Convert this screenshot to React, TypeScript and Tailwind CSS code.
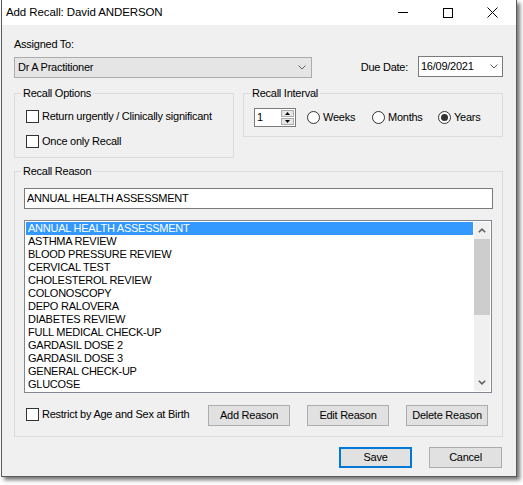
import { useState } from 'react';

const reasons = [
  'ANNUAL HEALTH ASSESSMENT',
  'ASTHMA REVIEW',
  'BLOOD PRESSURE REVIEW',
  'CERVICAL TEST',
  'CHOLESTEROL REVIEW',
  'COLONOSCOPY',
  'DEPO RALOVERA',
  'DIABETES REVIEW',
  'FULL MEDICAL CHECK-UP',
  'GARDASIL DOSE 2',
  'GARDASIL DOSE 3',
  'GENERAL CHECK-UP',
  'GLUCOSE',
];

function CheckBox({ label, checked, onChange }: { label: string; checked: boolean; onChange: () => void }) {
  return (
    <label className="flex items-center gap-[3px] cursor-default" onClick={onChange}>
      <span className="w-[13px] h-[13px] border border-[#333333] bg-white flex items-center justify-center shrink-0">
        {checked && (
          <svg width="9" height="7" viewBox="0 0 9 7">
            <path d="M0.5 3.5 L3.2 6 L8.5 0.5" stroke="#333" strokeWidth="1.4" fill="none" />
          </svg>
        )}
      </span>
      <span className="leading-[13px]">{label}</span>
    </label>
  );
}

function Radio({ label, checked, onSelect, width }: { label: string; checked: boolean; onSelect: () => void; width: string }) {
  return (
    <label className={`flex items-center gap-[3px] cursor-default ${width}`} onClick={onSelect}>
      <span className="w-[13px] h-[13px] rounded-full border border-[#333333] bg-white flex items-center justify-center shrink-0">
        {checked && <span className="w-[7px] h-[7px] rounded-full bg-[#333333]" />}
      </span>
      <span className="leading-[13px]">{label}</span>
    </label>
  );
}

function Button({ children, primary, width }: { children: React.ReactNode; primary?: boolean; width: string }) {
  return (
    <button
      className={`${width} h-[21px] bg-[#e1e1e1] flex items-center justify-center leading-[13px] ${
        primary ? 'border-2 border-[#0078d7]' : 'border border-[#adadad]'
      }`}
    >
      {children}
    </button>
  );
}

function Chevron() {
  return (
    <svg width="8" height="5" viewBox="0 0 8 5">
      <path d="M0.5 0.5 L4 4 L7.5 0.5" stroke="#606060" strokeWidth="1" fill="none" />
    </svg>
  );
}

export default function App() {
  const [urgent, setUrgent] = useState(false);
  const [onceOnly, setOnceOnly] = useState(false);
  const [restrict, setRestrict] = useState(false);
  const [interval, setInterval] = useState<'weeks' | 'months' | 'years'>('years');
  const [selected, setSelected] = useState(0);

  return (
    <div className="w-[523px] h-[485px] bg-white pl-[1px] font-['Liberation_Sans',Arial,sans-serif] text-[11px] tracking-[-0.25px] text-black">
      <div className="w-[516px] h-[477px] border-x border-b border-[#5a5a5a] bg-[#f0f0f0] flex flex-col shadow-[3px_3px_4px_rgba(0,0,0,0.55)]">
        {/* title bar */}
        <div className="h-[25px] bg-white flex items-center shrink-0">
          <span className="pl-[4px] text-[11.5px] tracking-[-0.1px]">Add Recall: David ANDERSON</span>
          <div className="ml-auto flex h-full mr-[1px]">
            <div className="w-[45px] flex items-center justify-center">
              <svg width="10" height="1" viewBox="0 0 10 1">
                <rect width="10" height="1" fill="#000" />
              </svg>
            </div>
            <div className="w-[45px] flex items-center justify-center">
              <svg width="10" height="10" viewBox="0 0 10 10">
                <rect x="0.5" y="0.5" width="9" height="9" stroke="#000" fill="none" />
              </svg>
            </div>
            <div className="w-[45px] flex items-center justify-center">
              <svg width="11" height="11" viewBox="0 0 11 11">
                <path d="M0.5 0.5 L10.5 10.5 M10.5 0.5 L0.5 10.5" stroke="#000" strokeWidth="1" />
              </svg>
            </div>
          </div>
        </div>

        <div className="flex flex-col pl-[12px] pr-[13px]">
          <div className="mt-[13px] leading-[13px]">Assigned To:</div>

          <div className="mt-[5px] flex items-start">
            <div className="mt-[1px] w-[298px] h-[21px] bg-[#e5e5e5] border border-[#acacac] flex items-center pl-[3px] pr-[5px]">
              <span>Dr A Practitioner</span>
              <span className="ml-auto">
                <Chevron />
              </span>
            </div>
            <span className="ml-auto mt-[5px] leading-[13px]">Due Date:</span>
            <div className="ml-[10px] w-[85px] h-[21px] bg-white border border-[#7a7a7a] flex items-center pl-[2px] pr-[4px]">
              <span>16/09/2021</span>
              <span className="ml-auto">
                <Chevron />
              </span>
            </div>
          </div>

          <div className="mt-[9px] flex items-start gap-[9px]">
            <fieldset className="w-[220px] h-[71px] border border-[#dcdcdc]">
              <legend className="ml-[6px] px-[2px] leading-[13px]">Recall Options</legend>
              <div className="pl-[11px] pt-[10px] flex flex-col gap-[12px]">
                <CheckBox label="Return urgently / Clinically significant" checked={urgent} onChange={() => setUrgent(!urgent)} />
                <CheckBox label="Once only Recall" checked={onceOnly} onChange={() => setOnceOnly(!onceOnly)} />
              </div>
            </fieldset>

            <fieldset className="w-[260px] h-[50px] border border-[#dcdcdc]">
              <legend className="ml-[6px] px-[2px] leading-[13px]">Recall Interval</legend>
              <div className="pl-[10px] pt-[8px] flex items-center">
                <div className="w-[42px] h-[19px] bg-white border border-[#7a7a7a] flex items-center pl-[2px]">
                  <span>1</span>
                  <div className="ml-auto mr-[1px] w-[13px] h-[15px] flex flex-col gap-[1px]">
                    <div className="flex-1 bg-[#e6e6e6] border border-[#adadad] flex items-center justify-center">
                      <svg width="5" height="3" viewBox="0 0 5 3">
                        <path d="M2.5 0 L5 3 L0 3 Z" fill="#000" />
                      </svg>
                    </div>
                    <div className="flex-1 bg-[#e6e6e6] border border-[#adadad] flex items-center justify-center">
                      <svg width="5" height="3" viewBox="0 0 5 3">
                        <path d="M0 0 L5 0 L2.5 3 Z" fill="#000" />
                      </svg>
                    </div>
                  </div>
                </div>
                <div className="ml-[11px] flex items-center">
                  <Radio label="Weeks" width="w-[65px]" checked={interval === 'weeks'} onSelect={() => setInterval('weeks')} />
                  <Radio label="Months" width="w-[66px]" checked={interval === 'months'} onSelect={() => setInterval('months')} />
                  <Radio label="Years" width="w-[50px]" checked={interval === 'years'} onSelect={() => setInterval('years')} />
                </div>
              </div>
            </fieldset>
          </div>

          <fieldset className="mt-[7px] w-[489px] h-[272px] border border-[#dcdcdc]">
            <legend className="ml-[6px] px-[2px] leading-[13px]">Recall Reason</legend>
            <div className="px-[9px] pt-[10px] flex flex-col">
              <div className="w-[469px] h-[21px] bg-white border border-[#7a7a7a] flex items-center pl-[2px]">
                {reasons[selected]}
              </div>

              <div className="mt-[11px] w-[468px] h-[173px] bg-white border border-[#828790] p-[1px] flex">
                <div className="flex-1 flex flex-col overflow-hidden">
                  {reasons.map((r, i) => (
                    <div
                      key={r}
                      onClick={() => setSelected(i)}
                      className={`h-[13px] leading-[13px] pl-[2px] shrink-0 ${i === selected ? 'bg-[#3399ff] text-white' : ''}`}
                    >
                      {r}
                    </div>
                  ))}
                </div>
                <div className="w-[16px] ml-[1px] bg-[#f0f0f0] flex flex-col">
                  <div className="h-[17px] flex items-center justify-center">
                    <svg width="8" height="5" viewBox="0 0 8 5">
                      <path d="M0.8 4.3 L4 1.2 L7.2 4.3" stroke="#606060" strokeWidth="1.6" fill="none" />
                    </svg>
                  </div>
                  <div className="h-[76px] bg-[#cdcdcd]" />
                  <div className="flex-1" />
                  <div className="h-[17px] flex items-center justify-center">
                    <svg width="8" height="5" viewBox="0 0 8 5">
                      <path d="M0.8 0.7 L4 3.8 L7.2 0.7" stroke="#606060" strokeWidth="1.6" fill="none" />
                    </svg>
                  </div>
                </div>
              </div>

              <div className="mt-[12px] flex items-center">
                <div className="ml-[2px] w-[182px] -mt-[3px]">
                  <CheckBox label="Restrict by Age and Sex at Birth" checked={restrict} onChange={() => setRestrict(!restrict)} />
                </div>
                <div className="flex gap-[17px]">
                  <Button width="w-[82px]">Add Reason</Button>
                  <Button width="w-[82px]">Edit Reason</Button>
                  <Button width="w-[82px]">Delete Reason</Button>
                </div>
              </div>
            </div>
          </fieldset>

          <div className="mt-[10px] mr-[1px] flex justify-end gap-[17px]">
            <Button primary width="w-[73px]">Save</Button>
            <Button width="w-[73px]">Cancel</Button>
          </div>
        </div>
      </div>
    </div>
  );
}
